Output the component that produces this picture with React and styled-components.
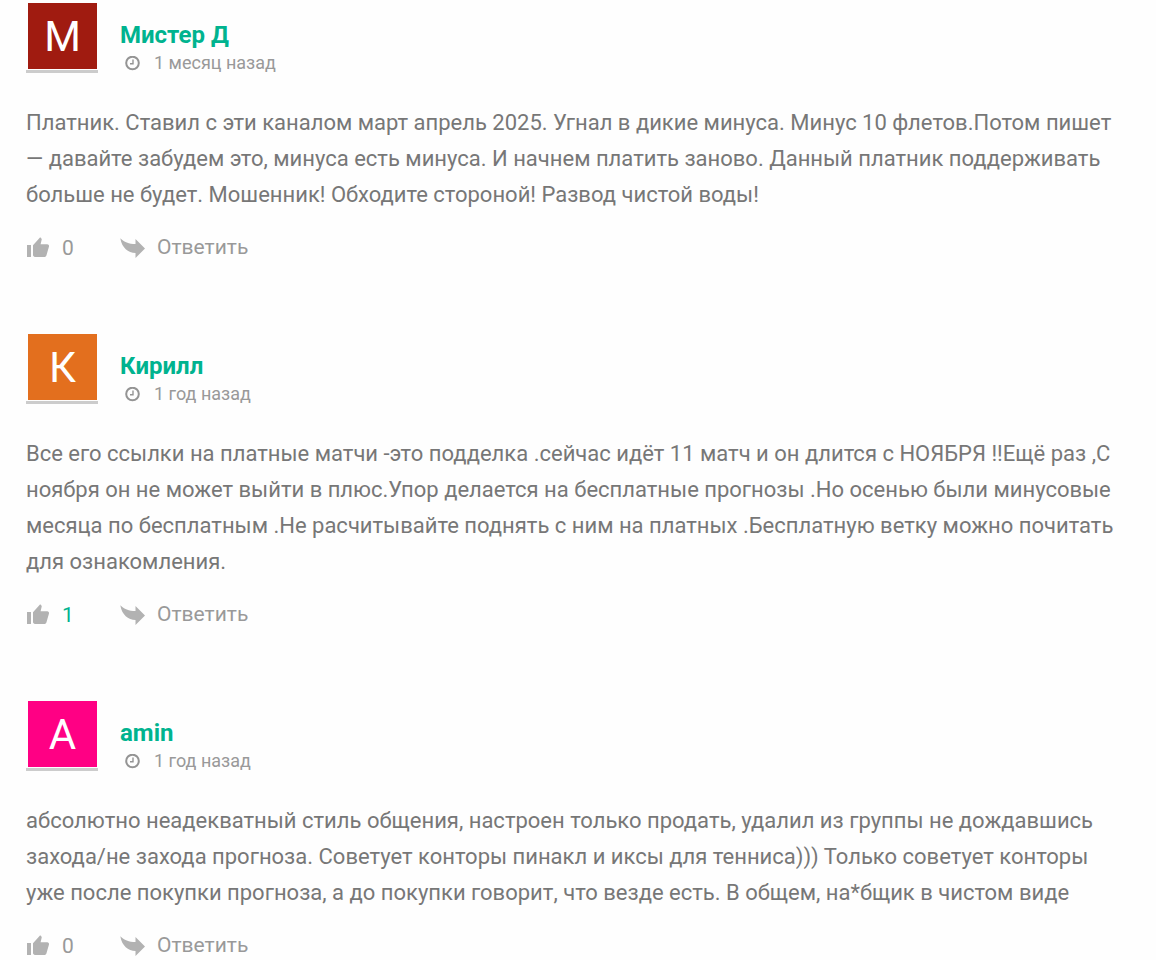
import React from "react";
import styled, { createGlobalStyle } from "styled-components";

const GlobalStyle = createGlobalStyle`
  * { box-sizing: border-box; }
  body {
    margin: 0;
    background: #fefefe;
    color: #777;
    font-family: Roboto, "Liberation Sans", sans-serif;
  }
`;

const Thread = styled.main`
  display: flex;
  flex-direction: column;
  gap: 70px;
  padding: 3px 30px 0 26px;
`;

const Comment = styled.article`
  display: flex;
  flex-direction: column;
`;

const Header = styled.header`
  display: flex;
  gap: 22px;
`;

const AvatarFrame = styled.div`
  flex: none;
  width: 72px;
  height: 70px;
  padding: 0 1px 0 2px;
  border-bottom: 3px solid #ccc;
`;

const Avatar = styled.div`
  display: flex;
  align-items: center;
  justify-content: center;
  height: 66px;
  padding-top: 2px;
  background: ${(p) => p.$color};
  color: #fff;
  font-size: 42px;
  line-height: 64px;
`;

const Meta = styled.div`
  padding-top: 18px;
`;

const Author = styled.h3`
  margin: 0;
  color: #00b38f;
  font-size: 24px;
  font-weight: 700;
  line-height: 28px;
`;

const Posted = styled.div`
  display: flex;
  align-items: center;
  gap: 14px;
  padding-left: 5px;
  color: #999;
  font-size: 18px;
  line-height: 28px;
`;

const Body = styled.p`
  margin: 28px 0 0;
  font-size: 22px;
  line-height: 36px;
`;

const Actions = styled.footer`
  display: flex;
  align-items: center;
  margin-top: 19px;
  height: 32px;
`;

const Votes = styled.div`
  display: flex;
  align-items: center;
  gap: 12px;
  width: 94px;
  color: ${(p) => (p.$positive ? "#00b38f" : "#999")};
  font-size: 21px;
  line-height: 32px;
`;

const PlainButton = styled.button`
  display: flex;
  align-items: center;
  gap: 11px;
  padding: 0;
  border: 0;
  background: none;
  color: #999;
  font: inherit;
  font-size: 21px;
  line-height: 28px;
  cursor: pointer;
`;

const ReplyLabel = styled.span`
  padding-bottom: 3px;
`;

const Icon = styled.svg`
  display: block;
  flex: none;
`;

const ClockIcon = () => (
  <Icon width="15" height="15" viewBox="0 0 15 15" fill="none" aria-hidden="true">
    <circle cx="7.5" cy="7" r="6.3" stroke="#949494" strokeWidth="2" />
    <path d="M8 3.400v4.400H5" stroke="#949494" strokeWidth="1.400" />
  </Icon>
);

const ThumbIcon = () => (
  <Icon width="24" height="22" viewBox="0 0 24 22" fill="#b2b2b2" aria-hidden="true">
    <path d="M1 8h4v12H1zM7 8.200 14.200 0.300l1.200 1.100c.3.3.4.7.3 1.100L14.600 7.200h6.600c1.200 0 2 1 1.800 2.200l-2.600 9.100c-.3.900-1 1.500-2 1.500H9c-1.100 0-2-.8-2-1.900z" />
  </Icon>
);

const ReplyIcon = () => (
  <Icon width="26" height="22" viewBox="0 0 26 22" fill="#b2b2b2" aria-hidden="true">
    <path d="M.3 1.200C4 4.800 9 7 15.500 7V2L25 11.500 15.500 21v-5C8 15.500 2 11 .3 1.200z" />
  </Icon>
);

const comments = [
  {
    author: "Мистер Д",
    letter: "М",
    color: "#a01b10",
    posted: "1 месяц назад",
    votes: 0,
    text: "Платник. Ставил с эти каналом март апрель 2025. Угнал в дикие минуса. Минус 10 флетов.Потом пишет — давайте забудем это, минуса есть минуса. И начнем платить заново. Данный платник поддерживать больше не будет. Мошенник! Обходите стороной! Развод чистой воды!",
  },
  {
    author: "Кирилл",
    letter: "К",
    color: "#e36f1e",
    posted: "1 год назад",
    votes: 1,
    text: "Все его ссылки на платные матчи -это подделка .сейчас идёт 11 матч и он длится с НОЯБРЯ !!Ещё раз ,С ноября он не может выйти в плюс.Упор делается на бесплатные прогнозы .Но осенью были минусовые месяца по бесплатным .Не расчитывайте поднять с ним на платных .Бесплатную ветку можно почитать для ознакомления.",
  },
  {
    author: "amin",
    letter: "А",
    color: "#ff0084",
    posted: "1 год назад",
    votes: 0,
    text: "абсолютно неадекватный стиль общения, настроен только продать, удалил из группы не дождавшись захода/не захода прогноза. Советует конторы пинакл и иксы для тенниса))) Только советует конторы уже после покупки прогноза, а до покупки говорит, что везде есть. В общем, на*бщик в чистом виде",
  },
];

export default function App() {
  return (
    <>
      <GlobalStyle />
      <Thread>
        {comments.map((c) => (
          <Comment key={c.author}>
            <Header>
              <AvatarFrame>
                <Avatar $color={c.color}>{c.letter}</Avatar>
              </AvatarFrame>
              <Meta>
                <Author>{c.author}</Author>
                <Posted>
                  <ClockIcon />
                  <time>{c.posted}</time>
                </Posted>
              </Meta>
            </Header>
            <Body>{c.text}</Body>
            <Actions>
              <Votes $positive={c.votes > 0}>
                <PlainButton type="button" aria-label="Нравится">
                  <ThumbIcon />
                </PlainButton>
                <span>{c.votes}</span>
              </Votes>
              <PlainButton type="button">
                <ReplyIcon />
                <ReplyLabel>Ответить</ReplyLabel>
              </PlainButton>
            </Actions>
          </Comment>
        ))}
      </Thread>
    </>
  );
}
